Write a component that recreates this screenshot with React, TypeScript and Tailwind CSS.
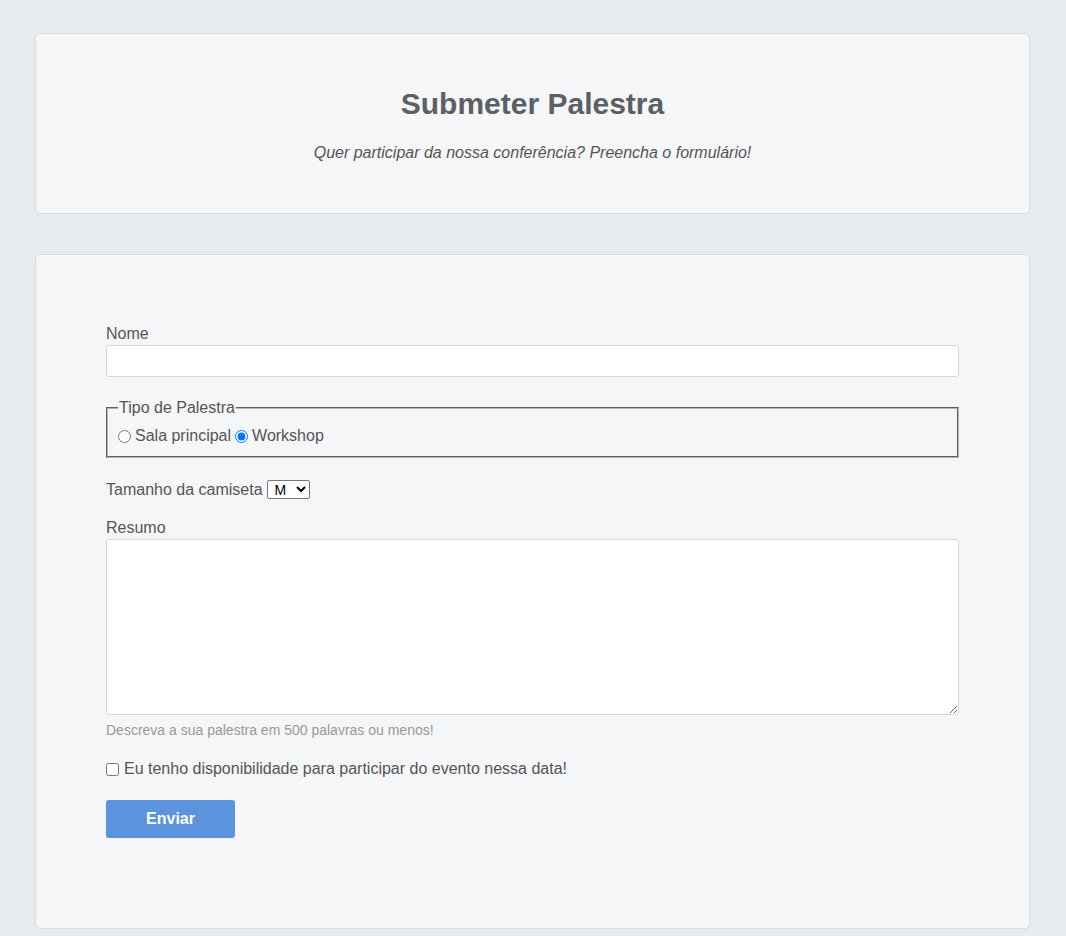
import { useState } from 'react';

export default function App() {
  const [tipo, setTipo] = useState('workshop');
  const [tamanho, setTamanho] = useState('M');

  return (
    <div
      className="min-h-[936px] bg-[#e8ebee] pt-[33px] pb-[8px] pl-[35px] text-[#555] text-[16px]"
      style={{ fontFamily: '"Liberation Sans", Arial, sans-serif' }}
    >
      {/* Header */}
      <header className="w-[995px] h-[181px] bg-[#f5f6f8] border border-[#d9dcdf] rounded-[5px] flex flex-col items-center pt-[53px]">
        <h1 className="text-[30px] font-bold text-[#5c5f63] leading-[34px]">Submeter Palestra</h1>
        <p className="italic mt-[23px] leading-[18px]">
          Quer participar da nossa conferência? Preencha o formulário!
        </p>
      </header>

      {/* Form */}
      <form className="mt-[40px] w-[995px] h-[675px] bg-[#f5f6f8] border border-[#d9dcdf] rounded-[5px] px-[70px] pt-[70px]">
        <label className="block leading-[18px]" htmlFor="nome">Nome</label>
        <input
          id="nome"
          type="text"
          className="mt-[2px] block w-[853px] h-[32px] bg-white border border-[#d3d6da] rounded-[3px] px-2"
        />

        <fieldset className="mt-[22px] w-[853px] h-[59px] border-2 border-[#b4b4b4] [border-style:groove] px-[10px] pb-[10px]">
          <legend className="px-[1px] leading-[18px]">Tipo de Palestra</legend>
          <div className="flex items-center mt-[10px] leading-[18px]">
            <input
              type="radio"
              name="tipo"
              checked={tipo === 'principal'}
              onChange={() => setTipo('principal')}
              className="w-[13px] h-[13px] mr-[4px]"
            />
            <span>Sala principal</span>
            <input
              type="radio"
              name="tipo"
              checked={tipo === 'workshop'}
              onChange={() => setTipo('workshop')}
              className="w-[13px] h-[13px] ml-[4px] mr-[4px]"
            />
            <span>Workshop</span>
          </div>
        </fieldset>

        <div className="mt-[22px] flex items-center leading-[18px]">
          <span>Tamanho da camiseta</span>
          <select
            value={tamanho}
            onChange={(e) => setTamanho(e.target.value)}
            className="ml-[4px] w-[43px] h-[19px] bg-white border border-[#767676] rounded-[2px] text-[14px] text-black pl-[3px]"
          >
            <option>P</option>
            <option>M</option>
            <option>G</option>
          </select>
        </div>

        <label className="block mt-[20px] leading-[18px]" htmlFor="resumo">Resumo</label>
        <textarea
          id="resumo"
          className="mt-[2px] block w-[853px] h-[176px] bg-white border border-[#d3d6da] rounded-[3px] p-2"
        />
        <p className="mt-[7px] text-[14px] text-[#999] leading-[16px]">
          Descreva a sua palestra em 500 palavras ou menos!
        </p>

        <label className="mt-[22px] flex items-center leading-[18px]">
          <input type="checkbox" className="w-[13px] h-[13px] mr-[5px]" />
          <span>Eu tenho disponibilidade para participar do evento nessa data!</span>
        </label>

        <button
          type="button"
          className="mt-[22px] w-[129px] h-[38px] bg-[#5b94dc] text-white font-bold rounded-[3px]"
        >
          Enviar
        </button>
      </form>
    </div>
  );
}
